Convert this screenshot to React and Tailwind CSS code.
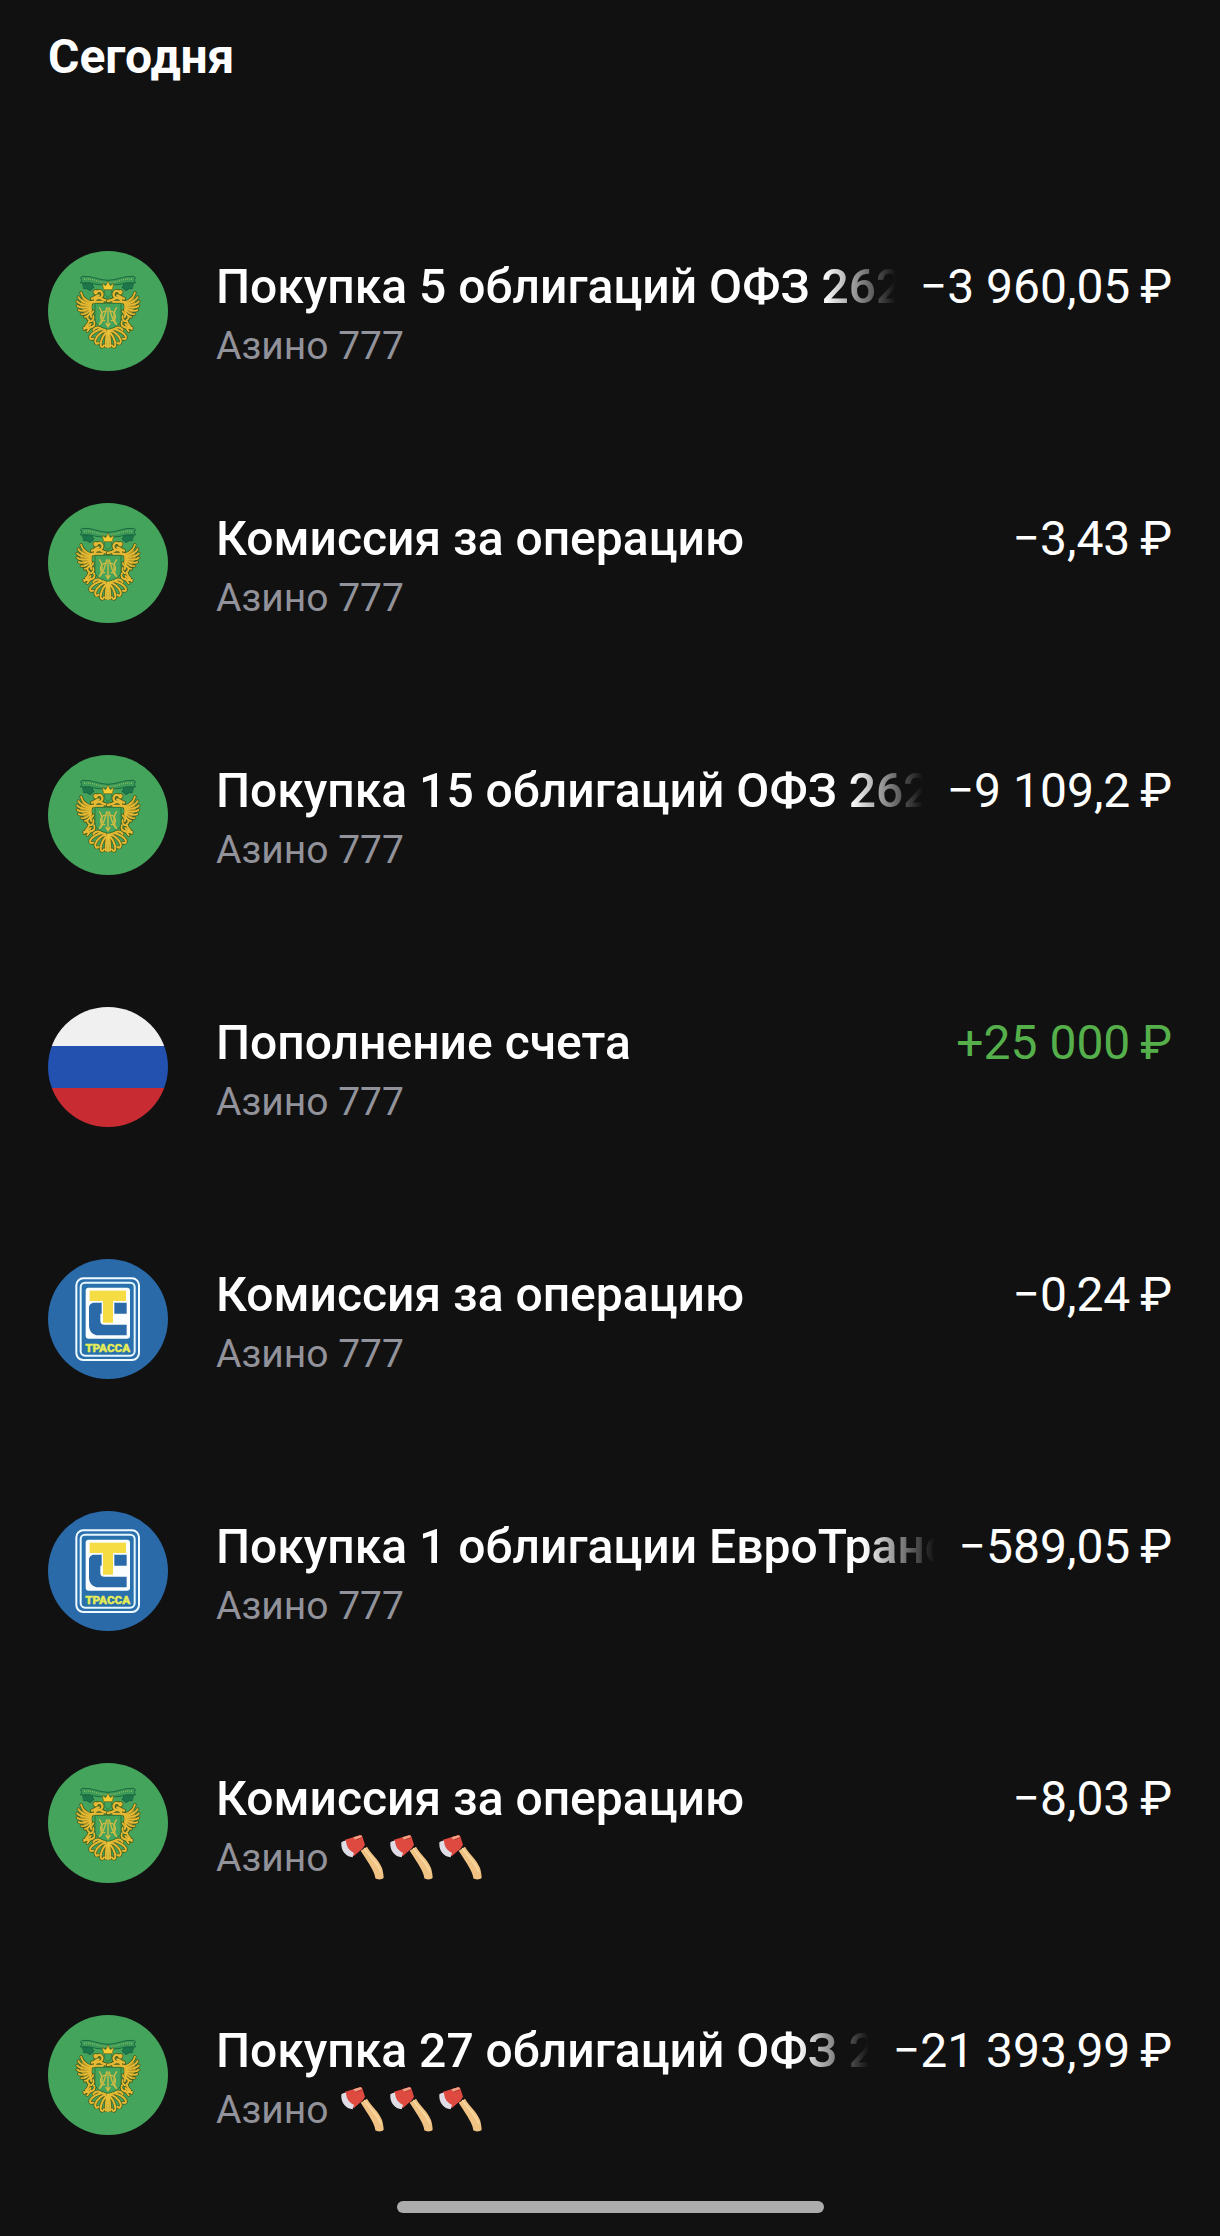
import React from "react";

const feathers =
  "M66 112 C52 108 38 98 33 82 M64 116 C50 114 32 108 25 95 M62 120 C48 120 28 118 21 108 M62 124 C48 127 30 130 22 121 M62 128 C50 134 34 140 26 134 M62 132 C54 142 44 149 34 146 M64 134 C60 146 53 154 44 155";

const plumes =
  "M112 192 C98 188 78 194 64 208 C56 215 60 224 70 220 M112 194 C98 196 82 208 76 224 C74 234 80 238 86 232 M113 196 C104 204 94 218 92 236 C92 246 98 248 102 240 M114 192 C110 206 106 226 108 244 M92 188 C84 184 74 188 70 194";

const legs =
  "M70 138 C64 144 60 150 64 156 M60 146 C50 150 50 160 58 164 M70 152 C74 160 66 170 56 168 M72 168 C78 178 70 184 62 186 M56 172 C50 180 48 184 43 192 M42 188 L56 188 M62 184 L52 198 M62 176 C58 182 54 184 48 182";

const heads =
  "M76 111 C72 104 76 99 86 98 C96 97 100 88 96 82 C92 75 82 75 80 82 M78 84 C70 80 74 77 80 78 M90 98 C100 104 106 106 114 107 M66 110 H98 M86 90 C78 92 74 98 66 100";

function EmblemHalf() {
  return (
    <g strokeLinecap="round" strokeLinejoin="round" fill="none">
      <path d="M38 54 L66 55 L72 66 L60 76 L50 70 L42 70 Z" fill="#1c774a" stroke="#155a3a" strokeWidth="2" />
      <g stroke="#4a5f1c">
        <path d={feathers} strokeWidth="10" />
        <path d={plumes} strokeWidth="10" />
        <path d={legs} strokeWidth="10" />
        <path d={heads} strokeWidth="12" />
      </g>
      <path d="M66 112 L38 96 L30 118 L42 144 L66 134 Z" fill="#a48c22" />
      <g stroke="#e6b935">
        <path d={feathers} strokeWidth="5" />
        <path d={plumes} strokeWidth="6" />
        <path d={legs} strokeWidth="5.5" />
        <path d={heads} strokeWidth="7" />
      </g>
      <path d="M114 45 C94 44 78 38 60 34 C52 33 44 34 36 33 L31 38 L36 44 L31 53 C46 51 62 52 74 56 C88 60 100 58 114 58" fill="#3b9a58" stroke="#1a6a42" strokeWidth="3" />
      <path d="M42 42 C58 40 72 44 86 48 C96 51 104 51 114 51" stroke="#a5c75e" strokeWidth="4" strokeDasharray="2 4" strokeLinecap="butt" />
    </g>
  );
}

function TreasuryLogo() {
  return (
    <svg viewBox="-66 -43 360 360" className="size-full" role="img" aria-label="ОФЗ">
      <rect x="-66" y="-43" width="360" height="360" fill="#45a45c" />
      <EmblemHalf />
      <g transform="translate(228 0) scale(-1 1)">
        <EmblemHalf />
      </g>
      <path d="M75 114 H153 V160 C153 178 138 186 114 192 C90 186 75 178 75 160 Z" fill="#45a45c" stroke="#2f6e33" strokeWidth="2.5" />
      <g fill="none" stroke="#d0bb43" strokeWidth="4" strokeLinecap="round">
        <path d="M88 127 C98 138 100 162 88 178 M140 127 C130 138 128 162 140 178" />
        <path d="M108 138 C88 136 86 168 104 166 M120 138 C140 136 142 168 124 166" />
        <path d="M92 174 C102 164 106 140 110 128 M136 174 C126 164 122 140 118 128" />
        <path d="M114 128 V182 M108 174 L114 184 L120 174" />
      </g>
      <path d="M114 196 V246" stroke="#f3cc40" strokeWidth="5" strokeLinecap="round" />
      <path d="M104 72 H124 V88 L114 97 L104 88 Z" fill="#45a45c" stroke="#2f6e33" strokeWidth="2" />
      <path d="M101 73 L97 54 L107 61 L114 48 L121 61 L131 54 L127 73 Z" fill="#f6ca33" stroke="#6b6a1d" strokeWidth="2" strokeLinejoin="round" />
    </svg>
  );
}

function TrassaLogo() {
  return (
    <svg viewBox="24 26 360 360" className="size-full" role="img" aria-label="Трасса">
      <rect x="24" y="26" width="360" height="360" fill="#2a6aa9" />
      <rect x="109" y="84" width="188" height="245" rx="21" fill="#2a6fae" stroke="#f0fbff" strokeWidth="6" />
      <rect x="122" y="97" width="162" height="219" rx="13" fill="#2871ad" stroke="#e6f7fd" strokeWidth="6" />
      <rect x="137" y="112" width="133" height="153" rx="9" fill="#fafdfe" />
      <path d="M260 157 H162 C153 157 147 164 147 172 V224 C147 242 158 255 176 255 H260 V223 H193 C185 223 181 219 181 211 V190 H260 Z" fill="#2a6aa9" />
      <path d="M185 157 H223 V220 H185 Z" fill="#fafdfe" />
      <rect x="149" y="121" width="109" height="31" fill="#f5dc42" />
      <rect x="189" y="148" width="30" height="69" fill="#f5dc42" />
      <text x="203" y="304" textAnchor="middle" fill="#e6ec55" stroke="#e6ec55" strokeWidth="1" fontSize="35" fontWeight="900" fontFamily="Roboto, sans-serif">ТРАССА</text>
    </svg>
  );
}

function RussiaFlag() {
  return (
    <div role="img" aria-label="Россия" className="flex size-full flex-col">
      <div className="flex-1 bg-[#f0f0f0]" />
      <div className="h-[42px] bg-[#2251b0]" />
      <div className="flex-1 bg-[#c92b33]" />
    </div>
  );
}

function Axe() {
  return (
    <svg viewBox="0 0 147 147" className="size-[49px] shrink-0" role="img" aria-label="топор">
      <path d="M62 50 L81 38 C92 58 116 76 126 102 C129 112 131 124 131 131 C128 137 112 138 106 133 C104 112 90 94 62 50 Z" fill="#f0c283" />
      <path d="M74 44 C86 64 112 84 122 112" fill="none" stroke="#f8d79f" strokeWidth="5" strokeLinecap="round" />
      <path d="M15 17 L60 4 C65 2 67 6 68 10 L75 32 C70 42 64 48 60 50 L42 66 C28 60 18 40 15 17 Z" fill="#de4a40" />
      <path d="M40 10 L60 4 C65 3 66 8 66 10 L46 18 Z" fill="#f3a184" />
      <path d="M46 18 L66 11" stroke="#b93932" strokeWidth="3" />
      <path d="M4 25 C10 20 14 20 18 20 C19 37 27 50 42 56 L38 70 C18 68 2 52 4 25 Z" fill="#dfdce5" />
    </svg>
  );
}

const logos = { ofz: TreasuryLogo, rus: RussiaFlag, trassa: TrassaLogo };

const operations = [
  { logo: "ofz", title: "Покупка 5 облигаций ОФЗ 262", amount: "−3 960,05" },
  { logo: "ofz", title: "Комиссия за операцию", amount: "−3,43" },
  { logo: "ofz", title: "Покупка 15 облигаций ОФЗ 262", amount: "−9 109,2" },
  { logo: "rus", title: "Пополнение счета", amount: "+25 000", income: true },
  { logo: "trassa", title: "Комиссия за операцию", amount: "−0,24" },
  { logo: "trassa", title: "Покупка 1 облигации ЕвроТранс", amount: "−589,05" },
  { logo: "ofz", title: "Комиссия за операцию", amount: "−8,03", axes: true },
  { logo: "ofz", title: "Покупка 27 облигаций ОФЗ 2", amount: "−21 393,99", axes: true },
];

function Operation({ logo, title, amount, income, axes }) {
  const Logo = logos[logo];
  return (
    <li className="flex items-center gap-12 py-[66px]">
      <div className="size-[120px] shrink-0 overflow-hidden rounded-full">
        <Logo />
      </div>
      <div className="h-[108px] min-w-0 flex-1">
        <div className="flex gap-6 text-5xl leading-[60px]">
          <h2 className="min-w-0 flex-1 overflow-hidden font-medium whitespace-nowrap [mask-image:linear-gradient(to_left,transparent,black_72px)]">
            {title}
          </h2>
          <p className={income ? "shrink-0 whitespace-nowrap text-[#55b04b]" : "shrink-0 whitespace-nowrap"}>
            {amount}{"\u2009₽"}
          </p>
        </div>
        <p className="flex items-center text-[39px] leading-[58px] text-[#92929a]">
          {axes ? (
            <>
              <span className="mr-[11px]">Азино</span>
              <Axe />
              <Axe />
              <Axe />
            </>
          ) : (
            "Азино 777"
          )}
        </p>
      </div>
    </li>
  );
}

export default function App() {
  return (
    <main className="flex min-h-screen flex-col bg-[#111111] px-12 pt-[27px] text-white [font-family:Roboto,sans-serif]">
      <h1 className="text-5xl leading-[60px] font-bold">Сегодня</h1>
      <ul className="mt-[98px]">
        {operations.map((op, i) => (
          <Operation key={i} {...op} />
        ))}
      </ul>
      <div className="mx-auto h-3 w-[427px] rounded-full bg-[#acacac]" />
    </main>
  );
}
